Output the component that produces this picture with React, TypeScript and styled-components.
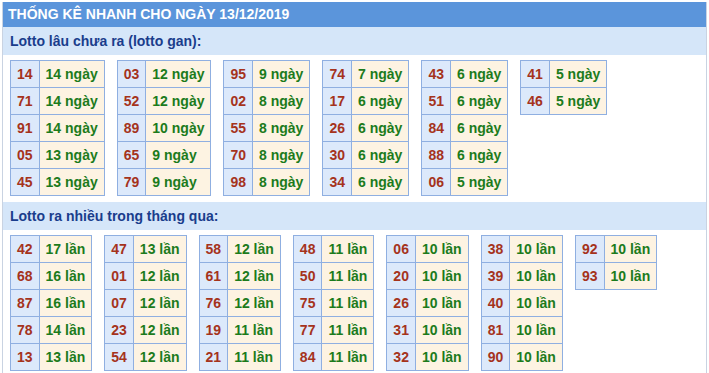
import React from "react";
import styled, { createGlobalStyle } from "styled-components";

const Global = createGlobalStyle`
  html, body { margin: 0; padding: 0; background: #ffffff; }
  body { font-family: "Liberation Sans", Arial, sans-serif; }
`;

const Panel = styled.div`
  margin: 2px 2px 0 2px;
  width: 705px;
  box-sizing: border-box;
  border-left: 1px solid #c9d3e2;
  border-right: 1px solid #c9d3e2;
  background: #fff;
`;

const Header = styled.div`
  height: 25px;
  background: #5b95db;
  color: #ffffff;
  font-weight: bold;
  font-size: 14px;
  line-height: 25px;
  padding-left: 5px;
`;

const SectionTitle = styled.div`
  height: 28px;
  background: #d5e6f9;
  color: #1a3d8c;
  font-weight: bold;
  font-size: 14px;
  line-height: 28px;
  padding-left: 7px;
`;

const Grid = styled.div<{ $bottom: number }>`
  display: flex;
  flex-wrap: wrap;
  align-items: flex-start;
  gap: 12px;
  padding: 5px 7px ${(p) => p.$bottom}px 7px;
`;

const Table = styled.table`
  border-collapse: collapse;
  font-size: 14px;
  font-weight: bold;
`;

const Cell = styled.td<{ $kind: "num" | "val" }>`
  height: 26px;
  padding: 0 6px;
  border: 1px solid #8fafe1;
  white-space: nowrap;
  line-height: 26px;
  background: ${(p) => (p.$kind === "num" ? "#dce9fb" : "#fdf3e2")};
  color: ${(p) => (p.$kind === "num" ? "#a5331c" : "#1c7b1c")};
`;

type Row = [string, string];

const ganData: Row[][] = [
  [["14", "14"], ["71", "14"], ["91", "14"], ["05", "13"], ["45", "13"]],
  [["03", "12"], ["52", "12"], ["89", "10"], ["65", "9"], ["79", "9"]],
  [["95", "9"], ["02", "8"], ["55", "8"], ["70", "8"], ["98", "8"]],
  [["74", "7"], ["17", "6"], ["26", "6"], ["30", "6"], ["34", "6"]],
  [["43", "6"], ["51", "6"], ["84", "6"], ["88", "6"], ["06", "5"]],
  [["41", "5"], ["46", "5"]],
];

const nhieuData: Row[][] = [
  [["42", "17"], ["68", "16"], ["87", "16"], ["78", "14"], ["13", "13"]],
  [["47", "13"], ["01", "12"], ["07", "12"], ["23", "12"], ["54", "12"]],
  [["58", "12"], ["61", "12"], ["76", "12"], ["19", "11"], ["21", "11"]],
  [["48", "11"], ["50", "11"], ["75", "11"], ["77", "11"], ["84", "11"]],
  [["06", "10"], ["20", "10"], ["26", "10"], ["31", "10"], ["32", "10"]],
  [["38", "10"], ["39", "10"], ["40", "10"], ["81", "10"], ["90", "10"]],
  [["92", "10"], ["93", "10"]],
];

function StatTable({ rows, unit }: { rows: Row[]; unit: string }) {
  return (
    <Table>
      <tbody>
        {rows.map(([n, v]) => (
          <tr key={n}>
            <Cell $kind="num">{n}</Cell>
            <Cell $kind="val">
              {v} {unit}
            </Cell>
          </tr>
        ))}
      </tbody>
    </Table>
  );
}

export default function App() {
  return (
    <>
      <Global />
      <Panel>
        <Header>THỐNG KÊ NHANH CHO NGÀY 13/12/2019</Header>
        <SectionTitle>Lotto lâu chưa ra (lotto gan):</SectionTitle>
        <Grid $bottom={6}>
          {ganData.map((rows, i) => (
            <StatTable key={i} rows={rows} unit="ngày" />
          ))}
        </Grid>
        <SectionTitle>Lotto ra nhiều trong tháng qua:</SectionTitle>
        <Grid $bottom={4}>
          {nhieuData.map((rows, i) => (
            <StatTable key={i} rows={rows} unit="lần" />
          ))}
        </Grid>
      </Panel>
    </>
  );
}
